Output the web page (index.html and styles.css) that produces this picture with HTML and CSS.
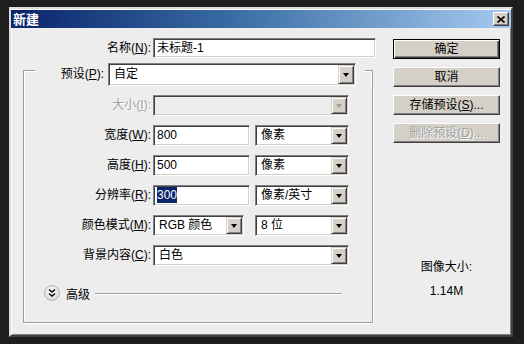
FILE: index.html
```html
<!DOCTYPE html>
<html>
<head>
<meta charset="utf-8">
<link rel="stylesheet" href="styles.css">
</head>
<body>
<div class="window">
  <div class="titlebar">
    <span class="title">新建</span>
    <span class="close"><svg width="8" height="7" viewBox="0 0 8 7"><path d="M0.5 0.5 L7.5 6.5 M7.5 0.5 L0.5 6.5" stroke="#000" stroke-width="1.6"/></svg></span>
  </div>
  <div class="content">
    <div class="left">
      <div class="name-row">
        <label class="lbl name-lbl">名称(<u>N</u>):</label>
        <div class="field name-field">未标题-1</div>
      </div>
      <div class="preset-row">
        <div class="corner-l"></div>
        <label class="lbl preset-lbl">预设(<u>P</u>):</label>
        <div class="select preset-sel"><span class="val">自定</span><span class="arrow"><i></i></span></div>
        <div class="corner-r"></div>
      </div>
      <div class="group">
        <div class="row">
          <label class="lbl disabled">大小(<u>I</u>):</label>
          <div class="select w-full is-disabled"><span class="val"></span><span class="arrow"><i></i></span></div>
        </div>
        <div class="row">
          <label class="lbl">宽度(<u>W</u>):</label>
          <div class="pair">
            <div class="field w-num">800</div>
            <div class="select w-unit"><span class="val">像素</span><span class="arrow"><i></i></span></div>
          </div>
        </div>
        <div class="row">
          <label class="lbl">高度(<u>H</u>):</label>
          <div class="pair">
            <div class="field w-num">500</div>
            <div class="select w-unit"><span class="val">像素</span><span class="arrow"><i></i></span></div>
          </div>
        </div>
        <div class="row">
          <label class="lbl">分辨率(<u>R</u>):</label>
          <div class="pair">
            <div class="field w-num"><span class="sel-text">300</span></div>
            <div class="select w-unit"><span class="val">像素/英寸</span><span class="arrow"><i></i></span></div>
          </div>
        </div>
        <div class="row">
          <label class="lbl">颜色模式(<u>M</u>):</label>
          <div class="pair wide-gap">
            <div class="select w-mode"><span class="val">RGB 颜色</span><span class="arrow"><i></i></span></div>
            <div class="select w-unit"><span class="val">8 位</span><span class="arrow"><i></i></span></div>
          </div>
        </div>
        <div class="row">
          <label class="lbl">背景内容(<u>C</u>):</label>
          <div class="select w-full"><span class="val">白色</span><span class="arrow"><i></i></span></div>
        </div>
        <div class="advanced">
          <svg class="adv-icon" width="16" height="16" viewBox="0 0 16 16">
            <defs>
              <radialGradient id="g" cx="45%" cy="40%" r="60%">
                <stop offset="0" stop-color="#ffffff"/>
                <stop offset="1" stop-color="#d8d8d8"/>
              </radialGradient>
            </defs>
            <circle cx="8" cy="8" r="7.5" fill="url(#g)" stroke="#b4b4b4"/>
            <path d="M5 4.5 L8 7 L11 4.5 M5 8.5 L8 11 L11 8.5" fill="none" stroke="#000" stroke-width="1.4"/>
          </svg>
          <span class="adv-text">高级</span>
          <span class="adv-line"></span>
        </div>
      </div>
    </div>
    <div class="right">
      <div class="btn default">确定</div>
      <div class="btn">取消</div>
      <div class="btn">存储预设(<u>S</u>)...</div>
      <div class="btn btn-disabled">删除预设(<u>D</u>)...</div>
      <div class="info">图像大小:<br>1.14M</div>
    </div>
  </div>
</div>
</body>
</html>
```

FILE: styles.css
```css
html, body {
  margin: 0;
  padding: 0;
}
body {
  background: #1e1e1e;
  font-family: "Liberation Sans", "Noto Sans CJK SC", sans-serif;
  font-size: 12px;
  color: #000;
  height: 344px;
  overflow: hidden;
}
u {
  text-decoration: underline;
  text-underline-offset: 1px;
}
.window {
  box-sizing: border-box;
  margin: 7px 0 0 9px;
  width: 504px;
  height: 330px;
  border: 2px solid;
  border-color: #dcdcdc #404040 #404040 #dcdcdc;
  box-shadow: inset 1px 1px 0 #ffffff, inset -1px -1px 0 #808080;
  background: #ededed;
  padding-top: 1px;
}
.titlebar {
  height: 18px;
  display: flex;
  align-items: center;
  justify-content: space-between;
  padding: 0 2px 0 2px;
  background: linear-gradient(to right, #0a246a 0%, #3a6ea5 45%, #a6caf0 100%);
}
.title {
  color: #fff;
  font-family: "Noto Sans CJK SC", sans-serif;
  font-weight: bold;
  font-size: 13px;
  line-height: 18px;
}
.close {
  box-sizing: border-box;
  width: 16px;
  height: 14px;
  background: #d4d0c8;
  border: 1px solid;
  border-color: #ffffff #404040 #404040 #ffffff;
  box-shadow: inset -1px -1px 0 #808080;
  display: flex;
  align-items: center;
  justify-content: center;
}
.close svg {
  display: block;
}
.content {
  display: flex;
  gap: 17px;
  padding-top: 10px;
}
.left {
  width: 365px;
}
.lbl {
  text-align: right;
  white-space: nowrap;
  line-height: 20px;
}
.lbl.disabled {
  color: #a0a0a0;
  text-shadow: 1px 1px 0 #fff;
}
.name-row {
  display: flex;
  gap: 2px;
  height: 20px;
}
.name-lbl {
  width: 140px;
}
.field {
  box-sizing: border-box;
  background: #fff;
  border: 1px solid;
  border-color: #808080 #ffffff #ffffff #808080;
  box-shadow: inset 1px 1px 0 #404040, inset -1px -1px 0 #d4d0c8;
  padding: 0 3px;
  line-height: 18px;
  white-space: nowrap;
  overflow: hidden;
}
.name-field {
  width: 223px;
  height: 20px;
}
.sel-text {
  background: #0a246a;
  color: #fff;
  padding: 1px 0;
}
.select {
  box-sizing: border-box;
  display: flex;
  align-items: stretch;
  background: #fff;
  border: 1px solid;
  border-color: #808080 #ffffff #ffffff #808080;
  box-shadow: inset 1px 1px 0 #404040, inset -1px -1px 0 #d4d0c8;
  padding: 1px;
  height: 21px;
}
.select .val {
  flex: 1;
  padding-left: 4px;
  line-height: 17px;
  white-space: nowrap;
  overflow: hidden;
}
.select .arrow {
  box-sizing: border-box;
  width: 16px;
  background: #d4d0c8;
  border: 1px solid;
  border-color: #d4d0c8 #404040 #404040 #d4d0c8;
  box-shadow: inset 1px 1px 0 #ffffff, inset -1px -1px 0 #808080;
  display: flex;
  align-items: center;
  justify-content: center;
}
.select .arrow i {
  width: 0;
  height: 0;
  border-left: 3.5px solid transparent;
  border-right: 3.5px solid transparent;
  border-top: 4px solid #000;
}
.select.is-disabled {
  background: #ededed;
}
.select.is-disabled .arrow i {
  border-top-color: #a0a0a0;
}
.preset-row {
  display: flex;
  width: 350px;
  height: 23px;
  margin: 5px 0 0 12px;
}
.corner-l, .corner-r {
  box-sizing: border-box;
  margin-top: 7px;
  height: 16px;
  border-top: 1px solid #9d9d9d;
  box-shadow: inset 0 1px 0 #fff;
}
.corner-l {
  width: 12px;
  border-left: 1px solid #9d9d9d;
  box-shadow: inset 1px 1px 0 #fff;
}
.corner-r {
  width: 8px;
  margin-left: 9px;
  border-right: 1px solid #9d9d9d;
  box-shadow: inset -1px 1px 0 #fff;
}
.preset-lbl {
  flex: 1;
  padding-right: 4px;
  line-height: 23px;
}
.preset-sel {
  width: 248px;
  height: 23px;
}
.preset-sel .val {
  line-height: 19px;
}
.group {
  box-sizing: border-box;
  width: 350px;
  margin-left: 12px;
  height: 237px;
  border: 1px solid #9d9d9d;
  border-top: none;
  box-shadow: 1px 1px 0 #fff, inset 1px 0 0 #fff;
  padding-top: 9px;
  display: flex;
  flex-direction: column;
  gap: 9px;
}
.row {
  display: flex;
  gap: 2px;
  height: 21px;
}
.row .lbl {
  width: 127px;
  line-height: 21px;
}
.pair {
  display: flex;
  gap: 5px;
}
.pair.wide-gap {
  gap: 11px;
}
.w-full {
  width: 196px;
}
.w-num {
  width: 97px;
  height: 21px;
  line-height: 19px;
}
.w-unit {
  width: 94px;
}
.w-mode {
  width: 91px;
}
.advanced {
  display: flex;
  align-items: center;
  margin-top: 10px;
  padding-left: 20px;
  height: 16px;
}
.adv-icon {
  display: block;
}
.adv-text {
  margin-left: 6px;
  font-family: "Noto Sans CJK SC", sans-serif;
}
.adv-line {
  flex: 1;
  margin: 0 30px 0 5px;
  height: 1px;
  background: #a0a0a0;
  box-shadow: 0 1px 0 #fff;
}
.right {
  width: 107px;
  padding-top: 1px;
  display: flex;
  flex-direction: column;
}
.btn {
  box-sizing: border-box;
  height: 20px;
  margin-bottom: 8px;
  background: #d4d0c8;
  border: 1px solid;
  border-color: #ffffff #404040 #404040 #ffffff;
  box-shadow: inset -1px -1px 0 #808080;
  text-align: center;
  line-height: 18px;
  white-space: nowrap;
}
.btn.default {
  border: 1px solid #000;
  box-shadow: inset 1px 1px 0 #fff, inset -1px -1px 0 #404040, inset -2px -2px 0 #808080;
}
.btn-disabled {
  color: #a0a0a0;
  text-shadow: 1px 1px 0 #fff;
}
.info {
  margin-top: 104px;
  text-align: center;
  line-height: 24px;
}
```
